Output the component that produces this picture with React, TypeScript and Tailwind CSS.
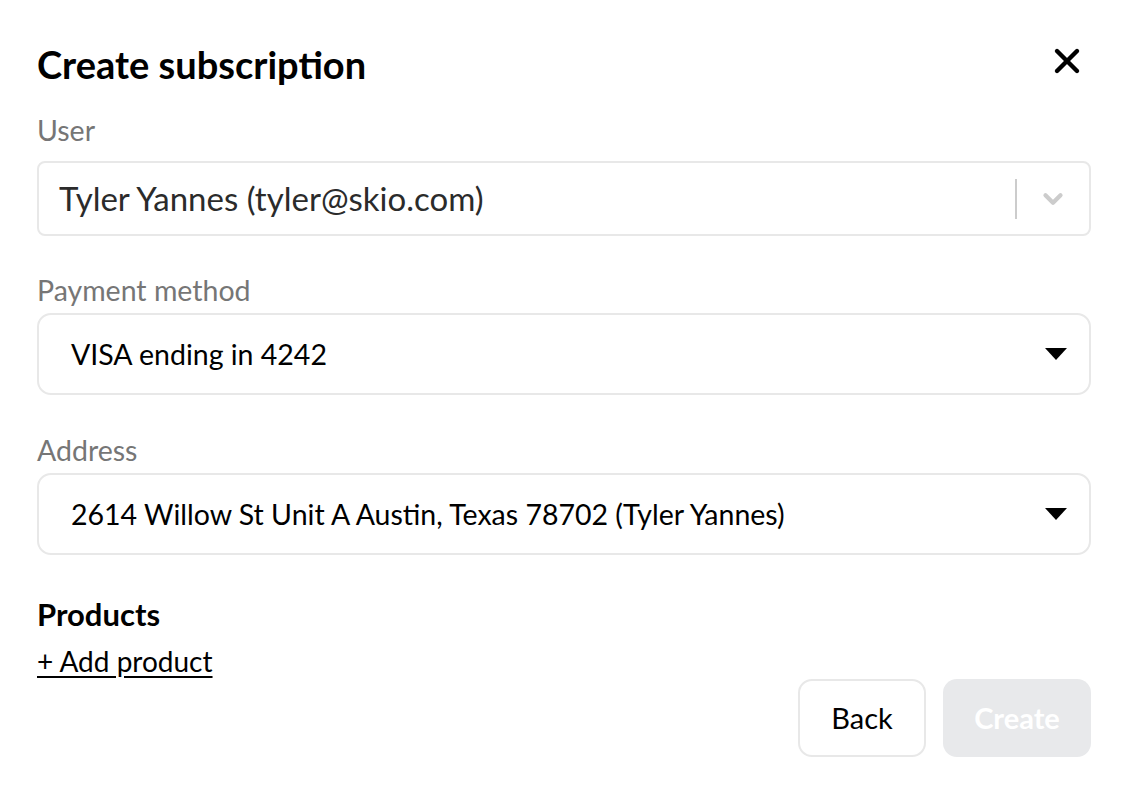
import { X, ChevronDown } from "lucide-react";

const font = { fontFamily: "Lato, 'Noto Sans', sans-serif" };

function Caret() {
  return (
    <svg width="22" height="12" viewBox="0 0 22 12" className="shrink-0">
      <path d="M0 0 H22 L11 12 Z" fill="#000" />
    </svg>
  );
}

function NativeSelect({ value }: { value: string }) {
  return (
    <div className="h-[82px] w-full rounded-[14px] border-2 border-[#e8e8e8] bg-white flex items-center justify-between pl-[32px] pr-[22px]">
      <span className="text-[28.5px] text-black">{value}</span>
      <Caret />
    </div>
  );
}

export default function App() {
  return (
    <div className="w-[1126px] h-[790px] bg-white pl-[37px] pr-[35px] pt-[40px]" style={font}>
      {/* Header */}
      <div className="flex items-center justify-between h-[48px]">
        <h1 className="text-[38px] font-bold text-black leading-[48px]">Create subscription</h1>
        <button className="-mt-[6px] mr-[4px] text-black">
          <X size={40} strokeWidth={2.6} />
        </button>
      </div>

      {/* User */}
      <label className="block mt-[26px] text-[28.5px] text-[#767676] leading-[32px]">User</label>
      <div className="mt-[15px] h-[75px] rounded-[8px] border-2 border-[#e8e8e8] flex items-center pl-[20px]">
        <span className="flex-1 text-[33px] text-[#2b2b2b]">Tyler Yannes (tyler@skio.com)</span>
        <span className="w-[2px] h-[40px] bg-[#cccccc]" />
        <span className="w-[72px] flex justify-center text-[#cccccc]">
          <ChevronDown size={30} strokeWidth={3.4} />
        </span>
      </div>

      {/* Payment method */}
      <label className="block mt-[38px] text-[28.5px] text-[#767676] leading-[32px]">Payment method</label>
      <div className="mt-[7px]">
        <NativeSelect value="VISA ending in 4242" />
      </div>

      {/* Address */}
      <label className="block mt-[39px] text-[28.5px] text-[#767676] leading-[32px]">Address</label>
      <div className="mt-[7px]">
        <NativeSelect value="2614 Willow St Unit A Austin, Texas 78702 (Tyler Yannes)" />
      </div>

      {/* Products */}
      <h2 className="mt-[39px] text-[31px] font-bold text-black leading-[40px]">Products</h2>
      <button className="mt-[10px] text-[28px] text-black underline underline-offset-4 leading-[34px]">
        + Add product
      </button>

      {/* Actions */}
      <div className="flex justify-end gap-[17px] mt-[1px]">
        <button className="w-[128px] h-[78px] rounded-[14px] border-2 border-[#e8e8e8] bg-white text-[29px] text-black">
          Back
        </button>
        <button className="w-[148px] h-[78px] rounded-[14px] bg-[#e8e9eb] text-[29px] font-bold text-white">
          Create
        </button>
      </div>
    </div>
  );
}
